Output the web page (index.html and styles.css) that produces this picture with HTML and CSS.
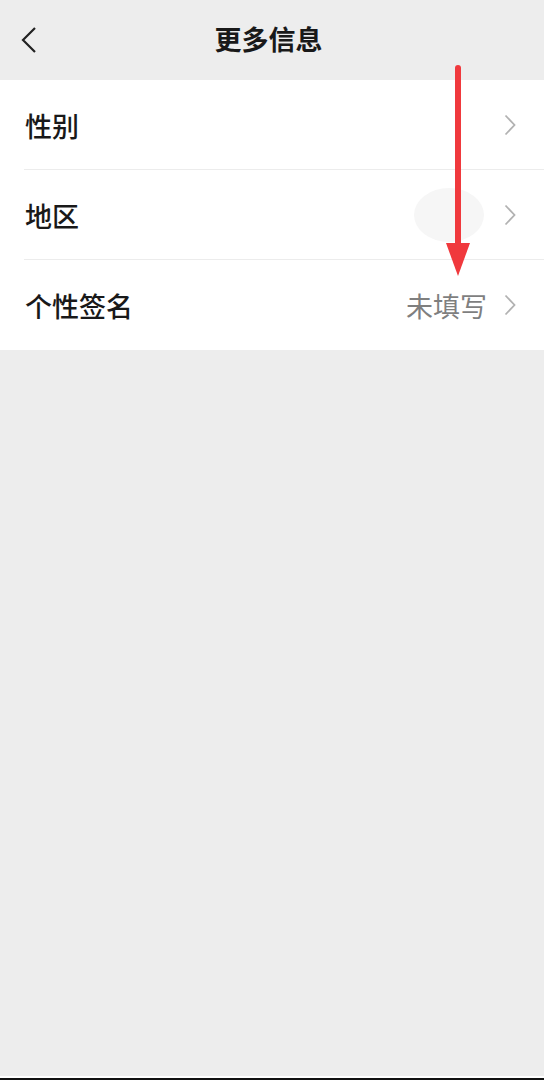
FILE: index.html
```html
<!DOCTYPE html>
<html lang="zh-CN">

<head>
    <meta charset="UTF-8" />
    <meta name="viewport" content="width=device-width, initial-scale=1.0" />
    <title>更多信息</title>
    <link rel="stylesheet" href="styles.css">
</head>

<body>
    <div class="page">
        <header class="topbar">
            <button class="back" aria-label="返回">
                <svg width="18" height="28" viewBox="0 0 18 28">
                    <path d="M15 2 L3 14 L15 26" fill="none" stroke="#222" stroke-width="2.2" />
                </svg>
            </button>
            <h1 class="title">更多信息</h1>
        </header>

        <ul class="list">
            <li class="row">
                <span class="label">性别</span>
                <span class="value"></span>
                <svg class="chevron" width="12" height="22" viewBox="0 0 12 22">
                    <path d="M1.5 1.5 L10.5 11 L1.5 20.5" fill="none" stroke="#b2b2b2" stroke-width="1.8" />
                </svg>
            </li>
            <li class="row">
                <span class="label">地区</span>
                <span class="value"><span class="blob"></span></span>
                <svg class="chevron" width="12" height="22" viewBox="0 0 12 22">
                    <path d="M1.5 1.5 L10.5 11 L1.5 20.5" fill="none" stroke="#b2b2b2" stroke-width="1.8" />
                </svg>
            </li>
            <li class="row">
                <span class="label">个性签名</span>
                <span class="value">未填写</span>
                <svg class="chevron" width="12" height="22" viewBox="0 0 12 22">
                    <path d="M1.5 1.5 L10.5 11 L1.5 20.5" fill="none" stroke="#b2b2b2" stroke-width="1.8" />
                </svg>
            </li>
        </ul>

        <svg class="arrow" width="30" height="214" viewBox="0 0 30 214">
            <line x1="15" y1="3" x2="15" y2="182" stroke="#f0393d" stroke-width="6" stroke-linecap="round" />
            <polygon points="3,178 27,178 15,211" fill="#f0393d" />
        </svg>

        <div class="homebar"></div>
    </div>
</body>

</html>
```

FILE: styles.css
```css
* {
    box-sizing: border-box;
}

body {
    margin: 0;
    background-color: #ededed;
    font-family: "Noto Sans CJK SC", "Noto Sans", sans-serif;
    color: #191919;
}

.page {
    position: relative;
    height: 1080px;
    display: flex;
    flex-direction: column;
}

.topbar {
    height: 80px;
    display: flex;
    align-items: center;
    justify-content: center;
    position: relative;
}

.back {
    position: absolute;
    left: 20px;
    top: 26px;
    padding: 0;
    border: none;
    background: none;
    display: flex;
}

.title {
    margin: 0;
    font-size: 27px;
    font-weight: 700;
    line-height: 1;
    margin-top: -4px;
    margin-right: 7px;
}

.list {
    list-style: none;
    margin: 0;
    padding: 0;
    background-color: #fff;
}

.row {
    height: 90px;
    display: flex;
    align-items: center;
    padding: 0 28px 0 25px;
    position: relative;
}

.row + .row::before {
    content: "";
    position: absolute;
    top: -1px;
    left: 24px;
    right: 0;
    height: 1px;
    background-color: #ececec;
}

.label {
    flex: 1;
    font-size: 27px;
    font-weight: 500;
    line-height: 1;
}

.value {
    font-size: 27px;
    line-height: 1;
    color: #7f7f7f;
    margin-right: 17px;
    display: flex;
}

.blob {
    width: 70px;
    height: 54px;
    border-radius: 50%;
    background-color: #f6f6f6;
    margin-right: 3px;
}

.chevron {
    display: block;
}

.arrow {
    position: absolute;
    left: 443px;
    top: 65px;
}

.homebar {
    margin-top: auto;
    height: 4px;
    border-top: 2px solid #fff;
    background-color: #111;
}
```
